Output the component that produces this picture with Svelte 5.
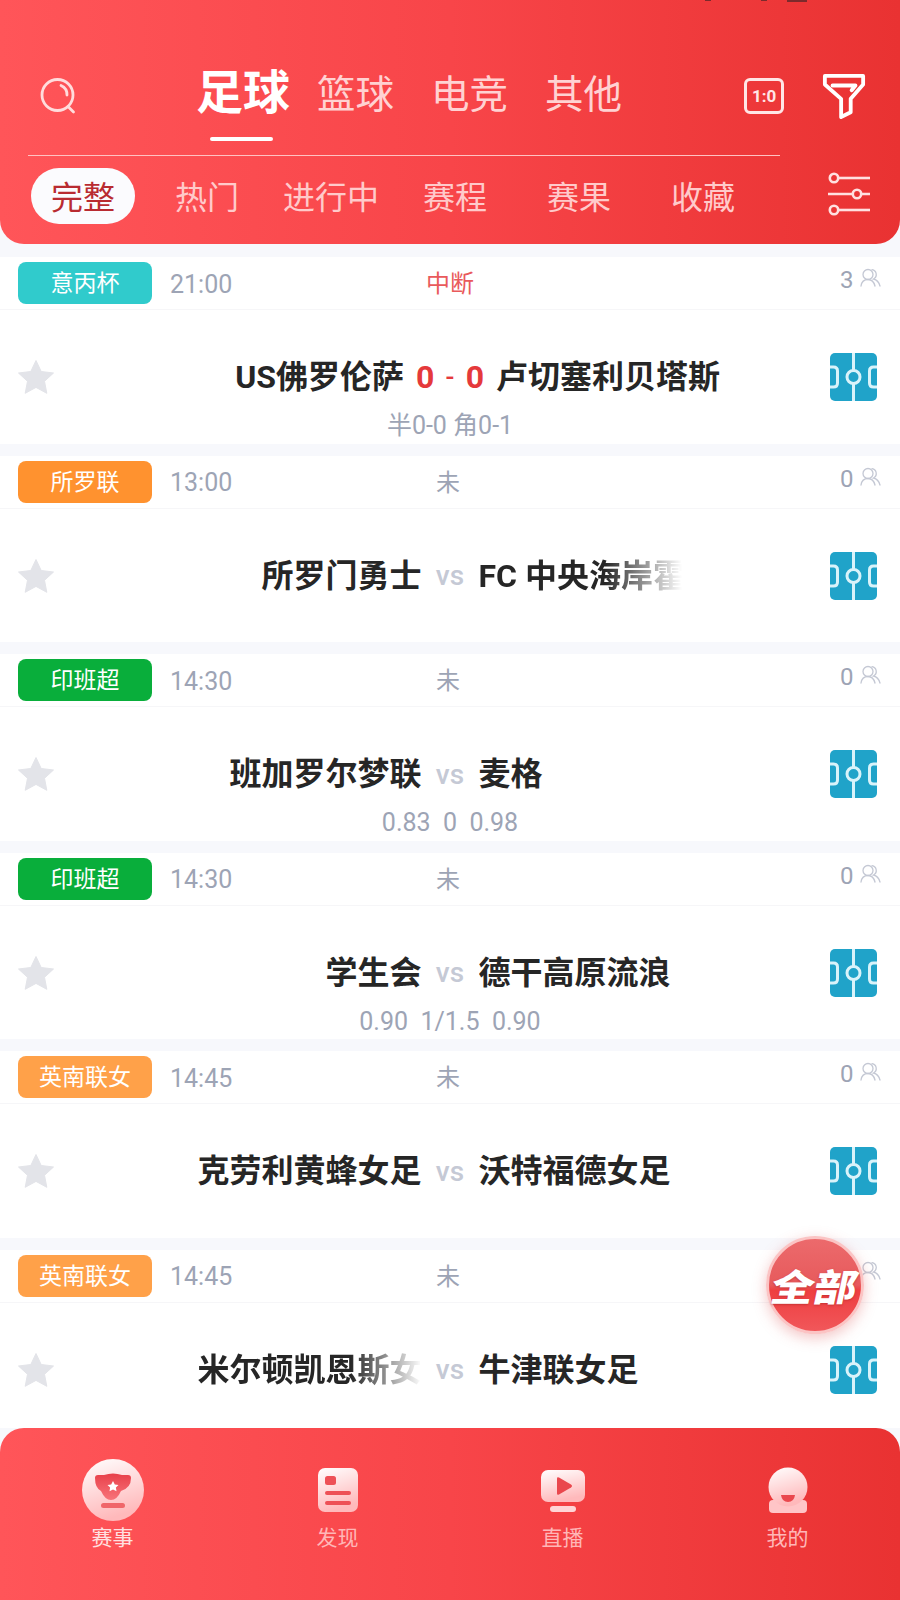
<script>
  const sports = ['篮球', '电竞', '其他'];
  const tabs = ['热门', '进行中', '赛程', '赛果', '收藏'];

  const matches = [
    { league: '意丙杯', color: '#30cbcc', time: '21:00', status: '中断', live: true, count: 3, home: 'US佛罗伦萨', away: '卢切塞利贝塔斯', score: [0, 0], sub: '半0-0 角0-1' },
    { league: '所罗联', color: '#ff922f', time: '13:00', status: '未', count: 0, home: '所罗门勇士', away: 'FC 中央海岸霍', fadeAway: true, sub: '' },
    { league: '印班超', color: '#09ae3b', time: '14:30', status: '未', count: 0, home: '班加罗尔梦联', away: '麦格', sub: '0.83  0  0.98' },
    { league: '印班超', color: '#09ae3b', time: '14:30', status: '未', count: 0, home: '学生会', away: '德干高原流浪', sub: '0.90  1/1.5  0.90' },
    { league: '英南联女', color: '#ffa149', time: '14:45', status: '未', count: 0, home: '克劳利黄蜂女足', away: '沃特福德女足', sub: '' },
    { league: '英南联女', color: '#ffa149', time: '14:45', status: '未', count: 0, home: '米尔顿凯恩斯女足', away: '牛津联女足', fadeHome: true, sub: '' }
  ];
</script>

<div class="page">
  <span class="status-bits"><i></i><i></i><i class="wide"></i></span>

  <header class="header">
    <div class="top-row">
      <svg class="search" width="38" height="38" viewBox="0 0 38 38" fill="none" stroke="#ffdcdc" stroke-width="2.8" stroke-linecap="round">
        <circle cx="17.5" cy="18" r="15.5" />
        <path d="M21 8.5a10 10 0 0 1 6 9.5" />
        <path d="M28 29.5l5.5 5.5" />
      </svg>
      <div class="sports">
        <div class="sport active">足球<span class="underline"></span></div>
        {#each sports as s}
          <div class="sport">{s}</div>
        {/each}
      </div>
      <div class="score-icon"><span>1:0</span></div>
      <svg class="funnel" width="44" height="46" viewBox="0 0 46 48" fill="none" stroke="#fff" stroke-width="4" stroke-linejoin="round" stroke-linecap="round">
        <path d="M3 3H43V12L30 27V41L20 46V27L3 12Z" />
        <path d="M11 13H35L31 18" />
      </svg>
    </div>
    <div class="divider"></div>
    <div class="tab-row">
      <div class="tab"><span class="pill">完整</span></div>
      {#each tabs as t}
        <div class="tab">{t}</div>
      {/each}
      <svg class="sliders" width="44" height="44" viewBox="0 0 44 44" fill="none" stroke="#ffe0e0" stroke-width="2.6">
        <circle cx="7" cy="6" r="4.2" />
        <path d="M12 6H43" />
        <path d="M1 22H25M35 22H43" />
        <circle cx="30" cy="22" r="4.2" />
        <circle cx="7" cy="38" r="4.2" />
        <path d="M12 38H43" />
      </svg>
    </div>
  </header>

  <main class="list">
    {#each matches as m}
      <section class="card">
        <div class="meta">
          <span class="tag" style="background:{m.color}">{m.league}</span>
          <span class="time">{m.time}</span>
          <span class="state" class:live={m.live}>{m.status}</span>
          <span class="count">{m.count}</span>
          <svg class="users" width="21" height="20" viewBox="0 0 21 20" fill="none" stroke="#c4c8d4" stroke-width="1.3" stroke-linecap="round">
            <circle cx="8" cy="6.5" r="5" />
            <path d="M1 18c.6-4 3.2-6.5 7-6.5s6 2.500 7 6.500" />
            <path d="M12 1.600a5 5 0 0 1 1.500 9.400c3.300.8 5.500 3.300 6.500 7" />
          </svg>
        </div>
        <div class="body">
          <div class="teams">
            <div class="side left">
              <svg class="star" width="38" height="36" viewBox="0 0 38 36">
                <path d="M19 1.500l5.200 11 12.300 1.500-9 8.300 2.300 12-10.800-5.900-10.800 5.900 2.300-12-9-8.300 12.300-1.500z" fill="#e3e4e9" stroke="#e3e4e9" stroke-linejoin="round" />
              </svg>
              <div class="name home" class:fade={m.fadeHome}>{m.home}</div>
            </div>
            {#if m.score}
              <div class="score"><b>{m.score[0]}</b><em>-</em><b>{m.score[1]}</b></div>
            {:else}
              <div class="vs">vs</div>
            {/if}
            <div class="side right">
              <div class="name away" class:fade={m.fadeAway}>{m.away}</div>
              <svg class="field" width="47" height="48" viewBox="0 0 47 48" fill="none">
                <rect width="47" height="48" rx="5" fill="#20a3c9" />
                <g stroke="#d9f3fa" stroke-width="3">
                  <circle cx="23.500" cy="24" r="6.500" />
                  <path d="M23.500 0V17.500M23.500 30.500V48" />
                  <path d="M0 14H3.500Q7.500 14 7.500 18V30Q7.500 34 3.500 34H0" />
                  <path d="M47 14H43.500Q39.500 14 39.500 18V30Q39.500 34 43.500 34H47" />
                </g>
              </svg>
            </div>
          </div>
          <div class="sub">{m.sub}</div>
        </div>
      </section>
    {/each}
  </main>

  <div class="all-btn"><span>全部</span></div>

  <nav class="bottom">
    <div class="nav-item active">
      <svg width="64" height="64" viewBox="0 0 64 64">
        <defs>
          <linearGradient id="pale" x1="0" y1="0" x2="0.300" y2="1">
            <stop offset="0" stop-color="#fff" />
            <stop offset="1" stop-color="#ffb9bb" />
          </linearGradient>
          <linearGradient id="palecup" x1="0" y1="0" x2="0" y2="1">
            <stop offset="0" stop-color="#e8404a" />
            <stop offset="1" stop-color="#f8747a" />
          </linearGradient>
        </defs>
        <circle cx="32" cy="32" r="31" fill="url(#pale)" />
        <path d="M14 20q0-3 3-3h6q9-3 18 0h6q3 0 3 3 0 10-10 13-4 9-10 9t-10-9Q14 30 14 20z" fill="url(#palecup)" />
        <path d="M32 23l1.800 3.400 3.700.5-2.600 2.600.6 3.700-3.500-1.700-3.500 1.700.6-3.700-2.600-2.600 3.700-.5z" fill="#fff" />
        <rect x="20" y="45" width="24" height="5" rx="2.500" fill="#f0666a" />
      </svg>
      <span>赛事</span>
    </div>
    <div class="nav-item">
      <svg width="64" height="64" viewBox="0 0 64 64">
        <rect x="12" y="10" width="40" height="44" rx="7" fill="url(#pale)" />
        <rect x="19" y="18" width="11" height="9" rx="2.500" fill="#ee5056" />
        <rect x="19" y="33" width="26" height="4" rx="2" fill="#ee5056" />
        <rect x="19" y="43" width="26" height="4" rx="2" fill="#ee5056" />
      </svg>
      <span>发现</span>
    </div>
    <div class="nav-item">
      <svg width="64" height="64" viewBox="0 0 64 64">
        <rect x="10" y="12" width="44" height="32" rx="7" fill="url(#pale)" />
        <path d="M26 20.500q0-2 2-1l12 7q2 1.500 0 3l-12 7q-2 1-2-1z" fill="#ea474d" />
        <rect x="19" y="48" width="26" height="6" rx="3" fill="#ffd4d5" />
      </svg>
      <span>直播</span>
    </div>
    <div class="nav-item">
      <svg width="64" height="64" viewBox="0 0 64 64">
        <rect x="13" y="42" width="38" height="13" rx="4" fill="#ffc5c7" />
        <circle cx="32" cy="29" r="19.500" fill="url(#pale)" />
        <path d="M25 37h14q-1 7-7 7t-7-7z" fill="#ea474d" />
      </svg>
      <span>我的</span>
    </div>
  </nav>
</div>

<style>
  :global(body) {
    margin: 0;
    background: #fff;
  }

  .page {
    position: relative;
    width: 900px;
    height: 1600px;
    overflow: hidden;
    display: flex;
    flex-direction: column;
    background: #f7f8fc;
    font-family: Roboto, "Noto Sans CJK SC", sans-serif;
  }

  .status-bits {
    position: absolute;
    top: 0;
    left: 705px;
    display: flex;
    gap: 50px;
  }
  .status-bits i {
    width: 6px;
    height: 1px;
    background: #7c2a2c;
  }
  .status-bits i.wide {
    width: 20px;
    height: 2px;
    margin-left: -30px;
  }

  /* top red block */
  .header {
    height: 244px;
    flex: none;
    box-sizing: border-box;
    padding-top: 68px;
    border-radius: 0 0 24px 24px;
    background: linear-gradient(90deg, #ff5559 0%, #f84549 50%, #e93232 100%);
  }

  .top-row {
    height: 87px;
    display: flex;
    align-items: flex-start;
    position: relative;
  }

  .search {
    margin: 9px 0 0 40px;
  }

  .sports {
    display: flex;
    margin-left: 118px;
    color: #ffd2d2;
    font-size: 38.5px;
    line-height: 50px;
  }
  .sport {
    margin-right: 37px;
    padding-top: 2px;
  }
  .sport.active {
    position: relative;
    margin-right: 27px;
    padding-top: 0;
    color: #fff;
    font-size: 47px;
    font-weight: 700;
  }
  .underline {
    position: absolute;
    left: 14px;
    top: 69px;
    width: 63px;
    height: 4px;
    border-radius: 2px;
    background: #fff;
  }

  .score-icon {
    margin: 10px 0 0 85px;
    width: 40px;
    height: 36px;
    box-sizing: border-box;
    border: 3px solid #ffe6e6;
    border-radius: 6px;
    display: flex;
    align-items: center;
    justify-content: center;
    color: #ffe6e6;
    font-size: 17px;
    font-weight: 700;
  }

  .funnel {
    margin: 5px 0 0 38px;
  }

  .divider {
    width: 752px;
    height: 1px;
    margin-left: 28px;
    background: #ffc2c2;
  }

  .tab-row {
    display: flex;
    align-items: flex-start;
    height: 56px;
    margin: 12px 0 0 21px;
  }
  .tab {
    width: 124px;
    flex: none;
    text-align: center;
    color: #ffcaca;
    font-size: 32px;
    line-height: 60px;
  }
  .pill {
    display: block;
    width: 104px;
    height: 56px;
    margin: 0 auto;
    border-radius: 28px;
    background: #fbfbfe;
    color: #b92b31;
  }
  .sliders {
    margin: 4px 0 0 62px;
  }

  /* match list */
  .list {
    flex: 1;
    min-height: 0;
    overflow: hidden;
    padding-top: 13px;
  }

  .card {
    height: 186.6px;
    margin-bottom: 12px;
    background: #fff;
  }

  .meta {
    height: 53px;
    box-sizing: border-box;
    display: flex;
    align-items: center;
    position: relative;
    border-bottom: 1px solid #f6f6f8;
  }
  .tag {
    width: 134px;
    height: 42px;
    margin-left: 18px;
    border-radius: 8px;
    text-align: center;
    color: #fff;
    font-size: 23px;
    line-height: 44px;
  }
  .time {
    margin: 2px 0 0 18px;
    color: #9da4b5;
    font-size: 25px;
  }
  .state {
    position: absolute;
    left: 0;
    right: 4px;
    top: 8px;
    text-align: center;
    color: #9da4b5;
    font-size: 24px;
    line-height: 38px;
  }
  .state.live {
    right: 0;
    color: #e95a5c;
  }
  .count {
    position: absolute;
    left: 840px;
    top: 9px;
    color: #9da4b5;
    font-size: 24px;
  }
  .users {
    position: absolute;
    left: 860px;
    top: 11px;
  }

  .body {
    padding-top: 42px;
  }

  .teams {
    display: grid;
    grid-template-columns: minmax(0, 1fr) auto minmax(0, 1fr);
    align-items: center;
    height: 50px;
  }
  .side {
    display: flex;
    align-items: center;
    min-width: 0;
  }
  .star {
    margin-left: 17px;
    flex: none;
  }
  .field {
    margin-left: auto;
    margin-right: 23px;
    flex: none;
  }

  .name {
    color: #262626;
    font-size: 32px;
    font-weight: 700;
    line-height: 50px;
    white-space: nowrap;
    overflow: hidden;
  }
  .home {
    margin-left: auto;
    max-width: 224px;
    text-align: right;
  }
  .home.fade {
    text-align: left;
    -webkit-mask-image: linear-gradient(90deg, #000 68%, transparent 100%);
    mask-image: linear-gradient(90deg, #000 68%, transparent 100%);
  }
  .away {
    max-width: 224px;
  }
  .away.fade {
    max-width: 203px;
    -webkit-mask-image: linear-gradient(90deg, #000 62%, transparent 100%);
    mask-image: linear-gradient(90deg, #000 62%, transparent 100%);
  }

  .vs {
    width: 57px;
    text-align: center;
    color: #c5c9d5;
    font-size: 28px;
    font-weight: 500;
  }

  .score {
    width: 92px;
    box-sizing: border-box;
    padding: 0 12px;
    display: flex;
    justify-content: space-between;
    align-items: center;
    color: #e5393b;
    font-size: 32px;
    font-weight: 700;
  }
  .score b {
    font-weight: 700;
  }
  .score em {
    font-style: normal;
    font-size: 26px;
    font-weight: 500;
  }

  .sub {
    height: 32px;
    margin-top: 8px;
    text-align: center;
    white-space: pre;
    color: #9da4b5;
    font-size: 25px;
    line-height: 32px;
  }

  /* floating button */
  .all-btn {
    position: absolute;
    left: 766px;
    top: 1236px;
    width: 98px;
    height: 98px;
    box-sizing: border-box;
    border: 3px solid #fbc4c4;
    border-radius: 50%;
    background: linear-gradient(180deg, #ec6a6c 0%, #e75a5c 50%, #ee3e40 56%, #f1575a 100%);
    box-shadow: 0 4px 14px rgba(220, 90, 90, 0.35);
    display: flex;
    align-items: center;
    justify-content: center;
  }
  .all-btn span {
    color: #fff;
    font-size: 37px;
    font-weight: 900;
    transform: skewX(-12deg) scaleX(1.16);
    text-shadow: 0 1px 2px rgba(160, 30, 30, 0.5);
  }

  /* bottom bar */
  .bottom {
    height: 172px;
    flex: none;
    display: grid;
    grid-template-columns: repeat(4, 225px);
    border-radius: 24px 24px 0 0;
    background: linear-gradient(90deg, #ff5559 0%, #f84549 50%, #e93232 100%);
  }
  .nav-item {
    display: flex;
    flex-direction: column;
    align-items: center;
    padding-top: 30px;
    color: #ffb6b7;
    font-size: 21px;
    line-height: 30px;
  }
  .nav-item.active {
    color: #ffe0e0;
  }
  .nav-item span {
    margin-top: 1px;
  }
</style>
